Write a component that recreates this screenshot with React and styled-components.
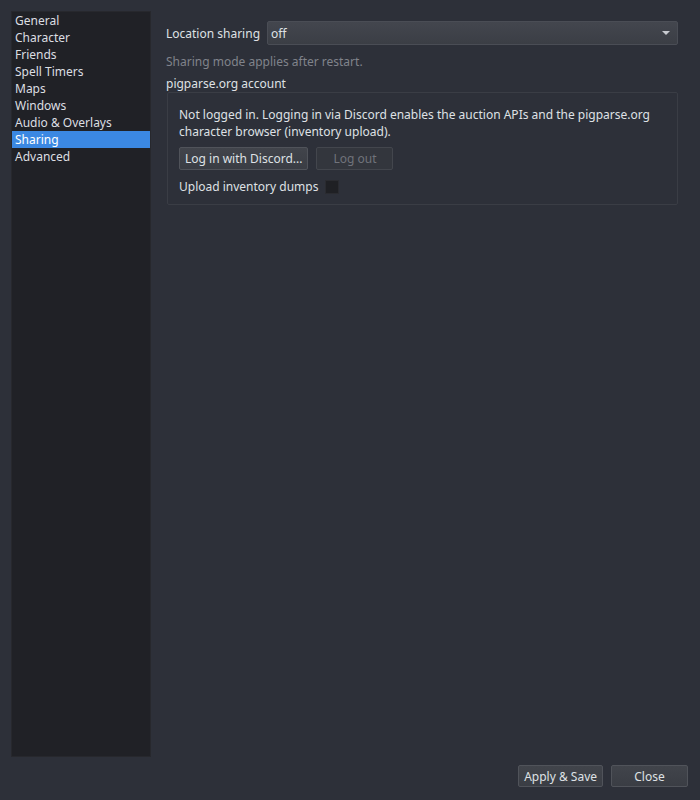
import React from 'react';
import styled, { createGlobalStyle } from 'styled-components';

const GlobalStyle = createGlobalStyle`
  html, body {
    margin: 0;
    padding: 0;
    background: #2d3039;
  }
  body {
    font-family: "Noto Sans", "Open Sans", sans-serif;
    font-size: 12px;
    color: #dfe1e5;
  }
`;

const Window = styled.div`
  box-sizing: border-box;
  width: 700px;
  height: 800px;
  padding: 11px 12px 13px 11px;
  display: flex;
  flex-direction: column;
  gap: 8px;
  background: #2d3039;
`;

const Body = styled.div`
  flex: 1;
  display: flex;
  min-height: 0;
`;

const Sidebar = styled.ul`
  box-sizing: border-box;
  width: 140px;
  margin: 0;
  padding: 0;
  list-style: none;
  background: #202126;
  border: 1px solid #27282d;
`;

const NavItem = styled.li`
  height: 17px;
  line-height: 17px;
  padding-left: 3px;
  color: ${({ active }) => (active ? '#ffffff' : '#dcdee2')};
  background: ${({ active }) => (active ? '#3b88e3' : 'transparent')};
  white-space: nowrap;
`;

const Main = styled.div`
  flex: 1;
  padding: 10px 10px 0 15px;
  display: flex;
  flex-direction: column;
`;

const FieldRow = styled.div`
  display: flex;
  align-items: center;
  gap: 7px;
`;

const Label = styled.span`
  line-height: 17px;
  white-space: nowrap;
`;

const Combo = styled.div`
  box-sizing: border-box;
  flex: 1;
  height: 24px;
  display: flex;
  align-items: center;
  justify-content: space-between;
  padding: 0 7px 0 3px;
  border: 1px solid #4a4d55;
  border-radius: 2px;
  background: linear-gradient(#43464e, #3b3e45);
`;

const Arrow = styled.span`
  width: 0;
  height: 0;
  border-left: 4px solid transparent;
  border-right: 4px solid transparent;
  border-top: 4px solid #c8cad0;
`;

const Hint = styled.div`
  margin-top: 8px;
  line-height: 17px;
  color: #80838b;
`;

const SectionTitle = styled.div`
  margin-top: 5px;
  line-height: 17px;
`;

const GroupBox = styled.div`
  box-sizing: border-box;
  margin-left: 1px;
  padding: 13px 10px 9px 11px;
  border: 1px solid #3a3d45;
  border-radius: 2px;
  display: flex;
  flex-direction: column;
`;

const Paragraph = styled.p`
  margin: 0;
  line-height: 17px;
`;

const ButtonRow = styled.div`
  display: flex;
  gap: 8px;
  margin-top: 7px;
`;

const Button = styled.button`
  box-sizing: border-box;
  height: ${({ tall }) => (tall ? '23px' : '22px')};
  min-width: 77px;
  padding: 0 5px;
  font: inherit;
  font-size: 12px;
  color: ${({ disabled }) => (disabled ? '#70737b' : '#dfe1e5')};
  background: ${({ disabled }) => (disabled ? '#33363d' : 'linear-gradient(#41444b, #3a3d44)')};
  border: 1px solid ${({ disabled }) => (disabled ? '#43464d' : '#50535a')};
  border-radius: 2px;
`;

const CheckRow = styled.div`
  display: flex;
  align-items: center;
  gap: 7px;
  margin-top: 8px;
  line-height: 17px;
`;

const CheckBox = styled.span`
  box-sizing: border-box;
  width: 14px;
  height: 14px;
  background: #1f2024;
  border: 1px solid #2a2b30;
`;

const Footer = styled.div`
  display: flex;
  justify-content: flex-end;
  gap: 8px;
`;

const navItems = [
  'General',
  'Character',
  'Friends',
  'Spell Timers',
  'Maps',
  'Windows',
  'Audio & Overlays',
  'Sharing',
  'Advanced',
];

const App = () => (
  <Window>
    <GlobalStyle />
    <Body>
      <Sidebar>
        {navItems.map((item) => (
          <NavItem key={item} active={item === 'Sharing'}>{item}</NavItem>
        ))}
      </Sidebar>
      <Main>
        <FieldRow>
          <Label>Location sharing</Label>
          <Combo>
            <span>off</span>
            <Arrow />
          </Combo>
        </FieldRow>
        <Hint>Sharing mode applies after restart.</Hint>
        <SectionTitle>pigparse.org account</SectionTitle>
        <GroupBox>
          <Paragraph>
            Not logged in. Logging in via Discord enables the auction APIs and the pigparse.org
            <br />
            character browser (inventory upload).
          </Paragraph>
          <ButtonRow>
            <Button tall>Log in with Discord...</Button>
            <Button tall disabled>Log out</Button>
          </ButtonRow>
          <CheckRow>
            <span>Upload inventory dumps</span>
            <CheckBox />
          </CheckRow>
        </GroupBox>
      </Main>
    </Body>
    <Footer>
      <Button>Apply &amp; Save</Button>
      <Button>Close</Button>
    </Footer>
  </Window>
);

export default App;
